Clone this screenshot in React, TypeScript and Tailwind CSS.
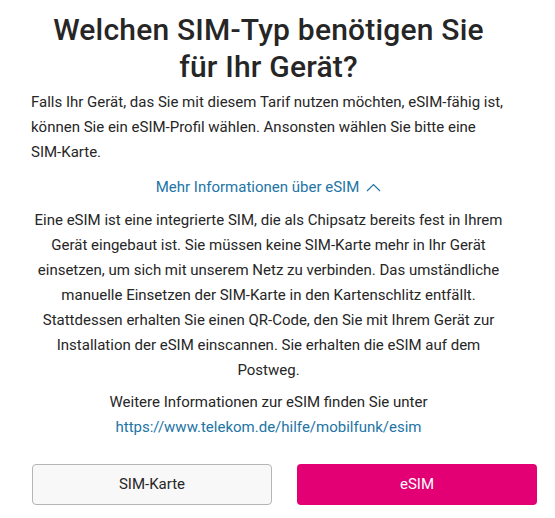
import React from 'react';

const App: React.FC = () => {
    return (
        <div className="w-[555px] h-[518px] bg-white overflow-hidden font-['Roboto','Liberation_Sans',sans-serif] text-[#262626]">
            <div className="pl-[31px] pr-[49px] pt-[11px]">
                <h1 className="text-center text-[30px] leading-[37px] font-medium tracking-[0.2px]">
                    Welchen SIM-Typ benötigen Sie<br />für Ihr Gerät?
                </h1>
                <p className="mt-[5px] text-[15px] leading-[25px]">
                    Falls Ihr Gerät, das Sie mit diesem Tarif nutzen möchten, eSIM-fähig ist, können Sie ein eSIM-Profil wählen. Ansonsten wählen Sie bitte eine SIM-Karte.
                </p>

                <button className="mx-auto mt-[12px] flex items-center gap-[7px] text-[15px] leading-[20px] text-[#2274a5]">
                    Mehr Informationen über eSIM
                    <svg width="15" height="9" viewBox="0 0 15 9" fill="none" stroke="currentColor" strokeWidth="1.2">
                        <path d="M1 8 L7.5 1.5 L14 8" />
                    </svg>
                </button>

                <div className="mt-[11px] text-center text-[15px] leading-[25px]">
                    <p>
                        Eine eSIM ist eine integrierte SIM, die als Chipsatz bereits fest in Ihrem Gerät eingebaut ist. Sie müssen keine SIM-Karte mehr in Ihr Gerät einsetzen, um sich mit unserem Netz zu verbinden. Das umständliche manuelle Einsetzen der SIM-Karte in den Kartenschlitz entfällt. Stattdessen erhalten Sie einen QR-Code, den Sie mit Ihrem Gerät zur Installation der eSIM einscannen. Sie erhalten die eSIM auf dem Postweg.
                    </p>
                    <p className="mt-[7px]">
                        Weitere Informationen zur eSIM finden Sie unter<br />
                        <a className="text-[#2274a5]">https://www.telekom.de/hilfe/mobilfunk/esim</a>
                    </p>
                </div>
            </div>

            <div className="mt-[24px] ml-[32px] w-[505px] grid grid-cols-2 gap-[25px]">
                <button className="h-[41px] rounded-[4px] border border-[#b5b5b5] bg-[#f8f8f8] text-[15px] text-[#262626]">
                    SIM-Karte
                </button>
                <button className="h-[41px] rounded-[4px] bg-[#e20074] text-[15px] text-white">
                    eSIM
                </button>
            </div>
        </div>
    );
};

export default App;
